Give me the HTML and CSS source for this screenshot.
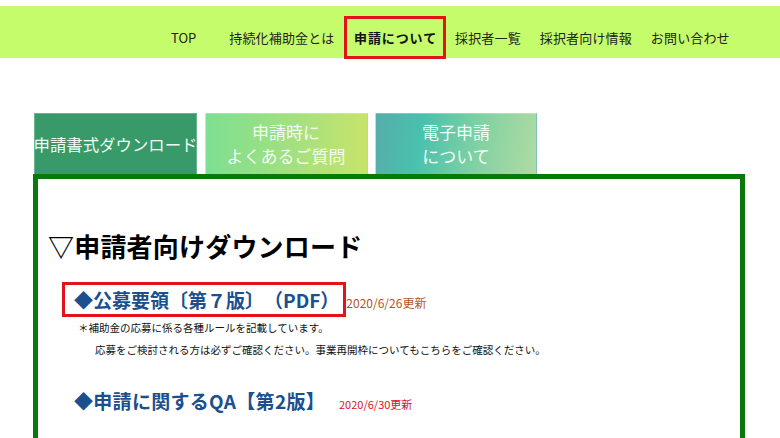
FILE: index.html
```html
<!DOCTYPE html>
<html lang="ja">
<head>
<meta charset="utf-8">
<title>申請について</title>
<link rel="stylesheet" href="styles.css">
</head>
<body>
<header class="nav">
  <a class="nav-item nav-top">TOP</a>
  <a class="nav-item">持続化補助金とは</a>
  <a class="nav-item nav-active">申請について</a>
  <a class="nav-item">採択者一覧</a>
  <a class="nav-item">採択者向け情報</a>
  <a class="nav-item">お問い合わせ</a>
</header>
<main class="main">
  <div class="tabs">
    <div class="tab tab-1">申請書式ダウンロード</div>
    <div class="tab tab-2">申請時に<br>よくあるご質問</div>
    <div class="tab tab-3">電子申請<br>について</div>
  </div>
  <section class="panel">
    <h2 class="panel-title">▽申請者向けダウンロード</h2>
    <div class="item-row">
      <a class="item-link item-boxed">◆公募要領〔第７版〕（PDF）</a><span class="date date-brown">2020/6/26更新</span>
    </div>
    <p class="note note-1">＊補助金の応募に係る各種ルールを記載しています。</p>
    <p class="note note-2">応募をご検討される方は必ずご確認ください。事業再開枠についてもこちらをご確認ください。</p>
    <div class="item-row item-row-2">
      <a class="item-link">◆申請に関するQA【第2版】</a><span class="date date-red">2020/6/30更新</span>
    </div>
  </section>
</main>
</body>
</html>
```
FILE: styles.css
```css
html, body {
  margin: 0;
  padding: 0;
  background: #ffffff;
  font-family: "Noto Sans CJK JP", "Noto Sans", sans-serif;
  color: #111;
  overflow: hidden;
  text-spacing-trim: space-all;
}

.nav {
  margin-top: 6px;
  height: 52px;
  box-sizing: border-box;
  padding: 10px 0 0 161.5px;
  background: #c4fc6c;
  display: flex;
  align-items: flex-start;
}

.nav-item {
  height: 43px;
  box-sizing: border-box;
  padding: 0 9.5px;
  display: flex;
  align-items: center;
  font-size: 13px;
  letter-spacing: 0.15px;
  color: #222;
  white-space: nowrap;
}

.nav-top {
  margin-right: 14px;
  letter-spacing: 0;
}

.nav-active {
  border: 3px solid #e3131b;
  padding: 0 5.5px 0 7px;
  font-weight: bold;
  letter-spacing: 0.9px;
  color: #111;
}

.main {
  margin-left: 33px;
  padding-top: 55px;
}

.tabs {
  display: flex;
  gap: 7.5px;
  margin-left: 1px;
}

.tab {
  width: 163px;
  height: 61px;
  box-sizing: border-box;
  display: flex;
  align-items: center;
  justify-content: center;
  text-align: center;
  color: #f2fbf5;
  font-size: 17px;
  line-height: 24px;
  border: 1px solid rgba(255, 255, 255, 0.25);
  border-bottom: none;
}

.tab-1 {
  background: #379a68;
  font-size: 16.4px;
  white-space: nowrap;
}

.tab-2 {
  background: linear-gradient(90deg, #7ddf91 0%, #a5e07f 55%, #c7e46a 100%);
}

.tab-3 {
  width: 162px;
  background: linear-gradient(100deg, #56acaa 0%, #49c1ae 28%, #84d2a2 65%, #b0dba2 100%);
}

.panel {
  width: 712px;
  height: 280px;
  box-sizing: border-box;
  border: 5px solid #0a780a;
  border-bottom: none;
  padding: 50px 0 0 10px;
}

.panel-title {
  margin: 0;
  font-size: 26px;
  line-height: 34px;
  font-weight: bold;
  color: #000;
  letter-spacing: 0.2px;
}

.item-row {
  display: flex;
  align-items: baseline;
  margin: 19px 0 0 14px;
}

.item-link {
  font-size: 19px;
  line-height: 29px;
  font-weight: bold;
  color: #1b4f8e;
  white-space: nowrap;
  padding-left: 12px;
  letter-spacing: 0.3px;
}

.item-boxed {
  border: 3px solid #e3131b;
  padding: 0 4px 0 9px;
  letter-spacing: 0;
}

.date {
  font-size: 12px;
  white-space: nowrap;
}

.date-brown {
  color: #b3561c;
}

.date-red {
  color: #d7141a;
  font-size: 11px;
  margin-left: 14px;
}

.note {
  margin: 0;
  font-size: 10.5px;
  line-height: 22px;
  color: #111;
  white-space: nowrap;
}

.note-1 {
  margin-left: 30px;
}

.note-2 {
  margin-left: 47px;
}

.item-row-2 {
  margin-top: 25px;
}
```
